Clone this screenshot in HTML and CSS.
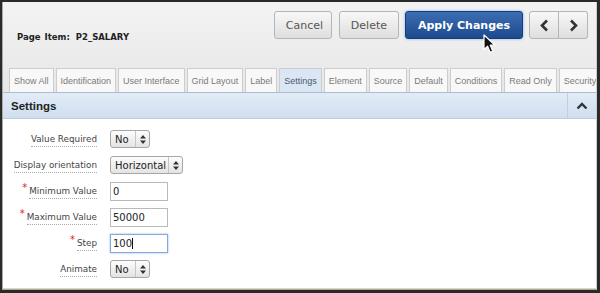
FILE: index.html
```html
<!DOCTYPE html>
<html>
<head>
  <meta charset="UTF-8">
  <title>Page Item: P2_SALARY</title>
  <link rel="stylesheet" href="styles.css">
</head>
<body>
  <div class="frame">
    <div class="page">
      <div class="top">
        <div class="top-row">
          <div class="item-title">Page Item: <span class="item-name">P2_SALARY</span></div>
          <div class="actions">
            <button class="btn">Cancel</button>
            <button class="btn">Delete</button>
            <button class="btn primary">Apply Changes</button>
            <div class="nav">
              <button class="btn nav-btn prev">
                <svg width="9" height="13" viewBox="0 0 9 13"><path d="M7 1.5 L2 6.5 L7 11.5" fill="none" stroke="#333" stroke-width="2.6"/></svg>
              </button>
              <button class="btn nav-btn next">
                <svg width="9" height="13" viewBox="0 0 9 13"><path d="M2 1.5 L7 6.5 L2 11.5" fill="none" stroke="#333" stroke-width="2.6"/></svg>
              </button>
            </div>
          </div>
        </div>
        <ul class="tabs">
          <li>Show All</li>
          <li>Identification</li>
          <li>User Interface</li>
          <li>Grid Layout</li>
          <li>Label</li>
          <li class="current">Settings</li>
          <li>Element</li>
          <li>Source</li>
          <li>Default</li>
          <li>Conditions</li>
          <li>Read Only</li>
          <li>Security</li>
        </ul>
      </div>

      <div class="region">
        <div class="region-head">
          <h2>Settings</h2>
          <button class="collapse">
            <svg width="12" height="8" viewBox="0 0 12 8"><path d="M1.5 6.5 L6 2 L10.5 6.5" fill="none" stroke="#333" stroke-width="2.4"/></svg>
          </button>
        </div>
        <div class="region-body">
          <div class="field-row">
            <label class="field-label"><span>Value Required</span></label>
            <div class="select narrow"><span class="select-text">No</span><span class="select-arrows"><svg width="6" height="9" viewBox="0 0 6 9"><path d="M3 0 L6 3.5 L0 3.5 Z M0 5.5 L6 5.5 L3 9 Z" fill="#333"/></svg></span></div>
          </div>
          <div class="field-row">
            <label class="field-label"><span>Display orientation</span></label>
            <div class="select"><span class="select-text">Horizontal</span><span class="select-arrows"><svg width="6" height="9" viewBox="0 0 6 9"><path d="M3 0 L6 3.5 L0 3.5 Z M0 5.5 L6 5.5 L3 9 Z" fill="#333"/></svg></span></div>
          </div>
          <div class="field-row">
            <label class="field-label"><i class="req">*</i><span>Minimum Value</span></label>
            <div class="text-input">0</div>
          </div>
          <div class="field-row">
            <label class="field-label"><i class="req">*</i><span>Maximum Value</span></label>
            <div class="text-input">50000</div>
          </div>
          <div class="field-row">
            <label class="field-label"><i class="req">*</i><span>Step</span></label>
            <div class="text-input focused">100<span class="caret"></span></div>
          </div>
          <div class="field-row">
            <label class="field-label"><span>Animate</span></label>
            <div class="select narrow"><span class="select-text">No</span><span class="select-arrows"><svg width="6" height="9" viewBox="0 0 6 9"><path d="M3 0 L6 3.5 L0 3.5 Z M0 5.5 L6 5.5 L3 9 Z" fill="#333"/></svg></span></div>
          </div>
        </div>
      </div>
    </div>

    <svg class="cursor" width="15" height="20" viewBox="0 0 15 20">
      <path d="M1 1 L1 15.5 L4.6 12.2 L7.2 18.4 L9.8 17.3 L7.3 11.2 L12 11.2 Z" fill="#111" stroke="#fff" stroke-width="1.2" stroke-linejoin="round"/>
    </svg>
  </div>
</body>
</html>
```

FILE: styles.css
```css
:root {
  --frame-color: #2a2a2a;
  --text-color: #222;
  --label-color: #444;
  --tab-text: #7a7a7a;
  --border-color: #bdbdbd;
  --primary-top: #3c6db3;
  --primary-bottom: #1d4a8d;
  --region-top: #e2ecf8;
  --region-bottom: #d0def0;
  --ui-font: "DejaVu Sans", "Liberation Sans", sans-serif;
  --tab-font: "Liberation Sans", Arial, sans-serif;
}

* {
  box-sizing: border-box;
}

body {
  margin: 0;
  font-family: var(--ui-font);
  color: var(--text-color);
  background: #fff;
}

.frame {
  position: relative;
  width: 600px;
  height: 293px;
  border: 2px solid var(--frame-color);
  border-right-width: 3px;
  border-bottom-width: 3px;
  overflow: hidden;
}

.page {
  height: 100%;
  display: flex;
  flex-direction: column;
  border-left: 1px solid #a9a9a9;
  border-right: 1px solid #cfcfcf;
  border-bottom: 1px solid #b8ac7e;
}

/* header */
.top {
  background: linear-gradient(#f3f3f3, #e7e7e7);
}

.top-row {
  display: flex;
  justify-content: space-between;
  align-items: flex-start;
  height: 66px;
  padding: 9px 8px 0 14px;
}

.item-title {
  margin-top: 21px;
  font-size: 8.5px;
  font-weight: bold;
  color: #222;
  word-spacing: 1px;
}

.item-name {
  margin-left: 2px;
}

.actions {
  display: flex;
  gap: 6px;
}

.btn {
  height: 28px;
  padding: 0 11px;
  font-family: var(--ui-font);
  font-size: 11px;
  color: #555;
  background: linear-gradient(#f8f8f8, #dedede);
  border: 1px solid #b5b5b5;
  border-radius: 3px;
  cursor: pointer;
}

.actions > .btn:first-child {
  width: 58px;
  margin-right: 1px;
}

.btn.primary {
  width: 118px;
  font-weight: bold;
  color: #fff;
  background: linear-gradient(var(--primary-top), var(--primary-bottom));
  border-color: #173d74;
  box-shadow: 0 0 3px rgba(90, 150, 230, 0.7);
}

.nav {
  display: flex;
}

.nav-btn {
  width: 30px;
  padding: 0;
  display: flex;
  align-items: center;
  justify-content: center;
}

.nav-btn.prev {
  border-radius: 3px 0 0 3px;
}

.nav-btn.next {
  width: 29px;
  border-left: none;
  border-radius: 0 3px 3px 0;
}

/* tabs */
.tabs {
  list-style: none;
  margin: 0;
  padding: 0 0 0 6px;
  display: flex;
  gap: 2px;
  height: 24px;
  overflow: hidden;
  white-space: nowrap;
}

.tabs li {
  flex: none;
  display: flex;
  align-items: center;
  padding: 0 4px;
  font-family: var(--tab-font);
  font-size: 9px;
  color: var(--tab-text);
  background: #f8f8f8;
  border: 1px solid #cdcdcd;
  border-bottom: none;
}

.tabs li.current {
  background: #dbe6f4;
  color: #4a5a70;
}

/* region */
.region {
  flex: 1;
  display: flex;
  flex-direction: column;
}

.region-head {
  display: flex;
  justify-content: space-between;
  height: 27px;
  background: linear-gradient(var(--region-top), var(--region-bottom));
  border-top: 1px solid #aebcd0;
  border-bottom: 1px solid #bccbde;
}

.region-head h2 {
  margin: 0;
  padding-left: 8px;
  display: flex;
  align-items: center;
  font-family: var(--tab-font);
  font-size: 11.5px;
  font-weight: bold;
  color: #222;
}

.collapse {
  width: 29px;
  padding: 0;
  background: none;
  border: none;
  border-left: 1px solid #c3cfdf;
  display: flex;
  align-items: center;
  justify-content: center;
}

.region-body {
  flex: 1;
  padding-top: 7px;
  background: #fff;
  border-bottom: 1px solid #d6d6d6;
}

.field-row {
  display: grid;
  grid-template-columns: 94px auto;
  column-gap: 13px;
  align-items: center;
  justify-items: start;
  height: 26px;
}

.field-label {
  justify-self: end;
  display: flex;
  align-items: flex-start;
  font-size: 8.8px;
  color: var(--label-color);
}

.field-label span {
  padding: 3px 0 2px;
  border-bottom: 1px dotted #aaa;
}

.req {
  font-style: normal;
  font-size: 10px;
  line-height: 10px;
  color: #e21b1b;
  margin-right: 2px;
}

.select {
  display: flex;
  align-items: center;
  height: 18px;
  width: 73px;
  background: linear-gradient(#fdfdfd, #e3e3e3);
  border: 1px solid #a6a6a6;
  border-radius: 3px;
}

.select.narrow {
  width: 40px;
}

.select-text {
  flex: 1;
  padding-left: 4px;
  font-size: 10px;
  color: #222;
}

.select-arrows {
  width: 14px;
  height: 100%;
  border-left: 1px solid #c6c6c6;
  display: flex;
  align-items: center;
  justify-content: center;
}

.text-input {
  display: flex;
  align-items: center;
  width: 58px;
  height: 19px;
  padding-left: 2px;
  font-size: 10px;
  color: #222;
  background: #fff;
  border: 1px solid #bababa;
}

.text-input.focused {
  border-color: #86a9dc;
  box-shadow: 0 0 2px rgba(80, 130, 210, 0.6);
}

.caret {
  width: 1px;
  height: 11px;
  background: #111;
}

.cursor {
  position: absolute;
  left: 481px;
  top: 32px;
}
```
